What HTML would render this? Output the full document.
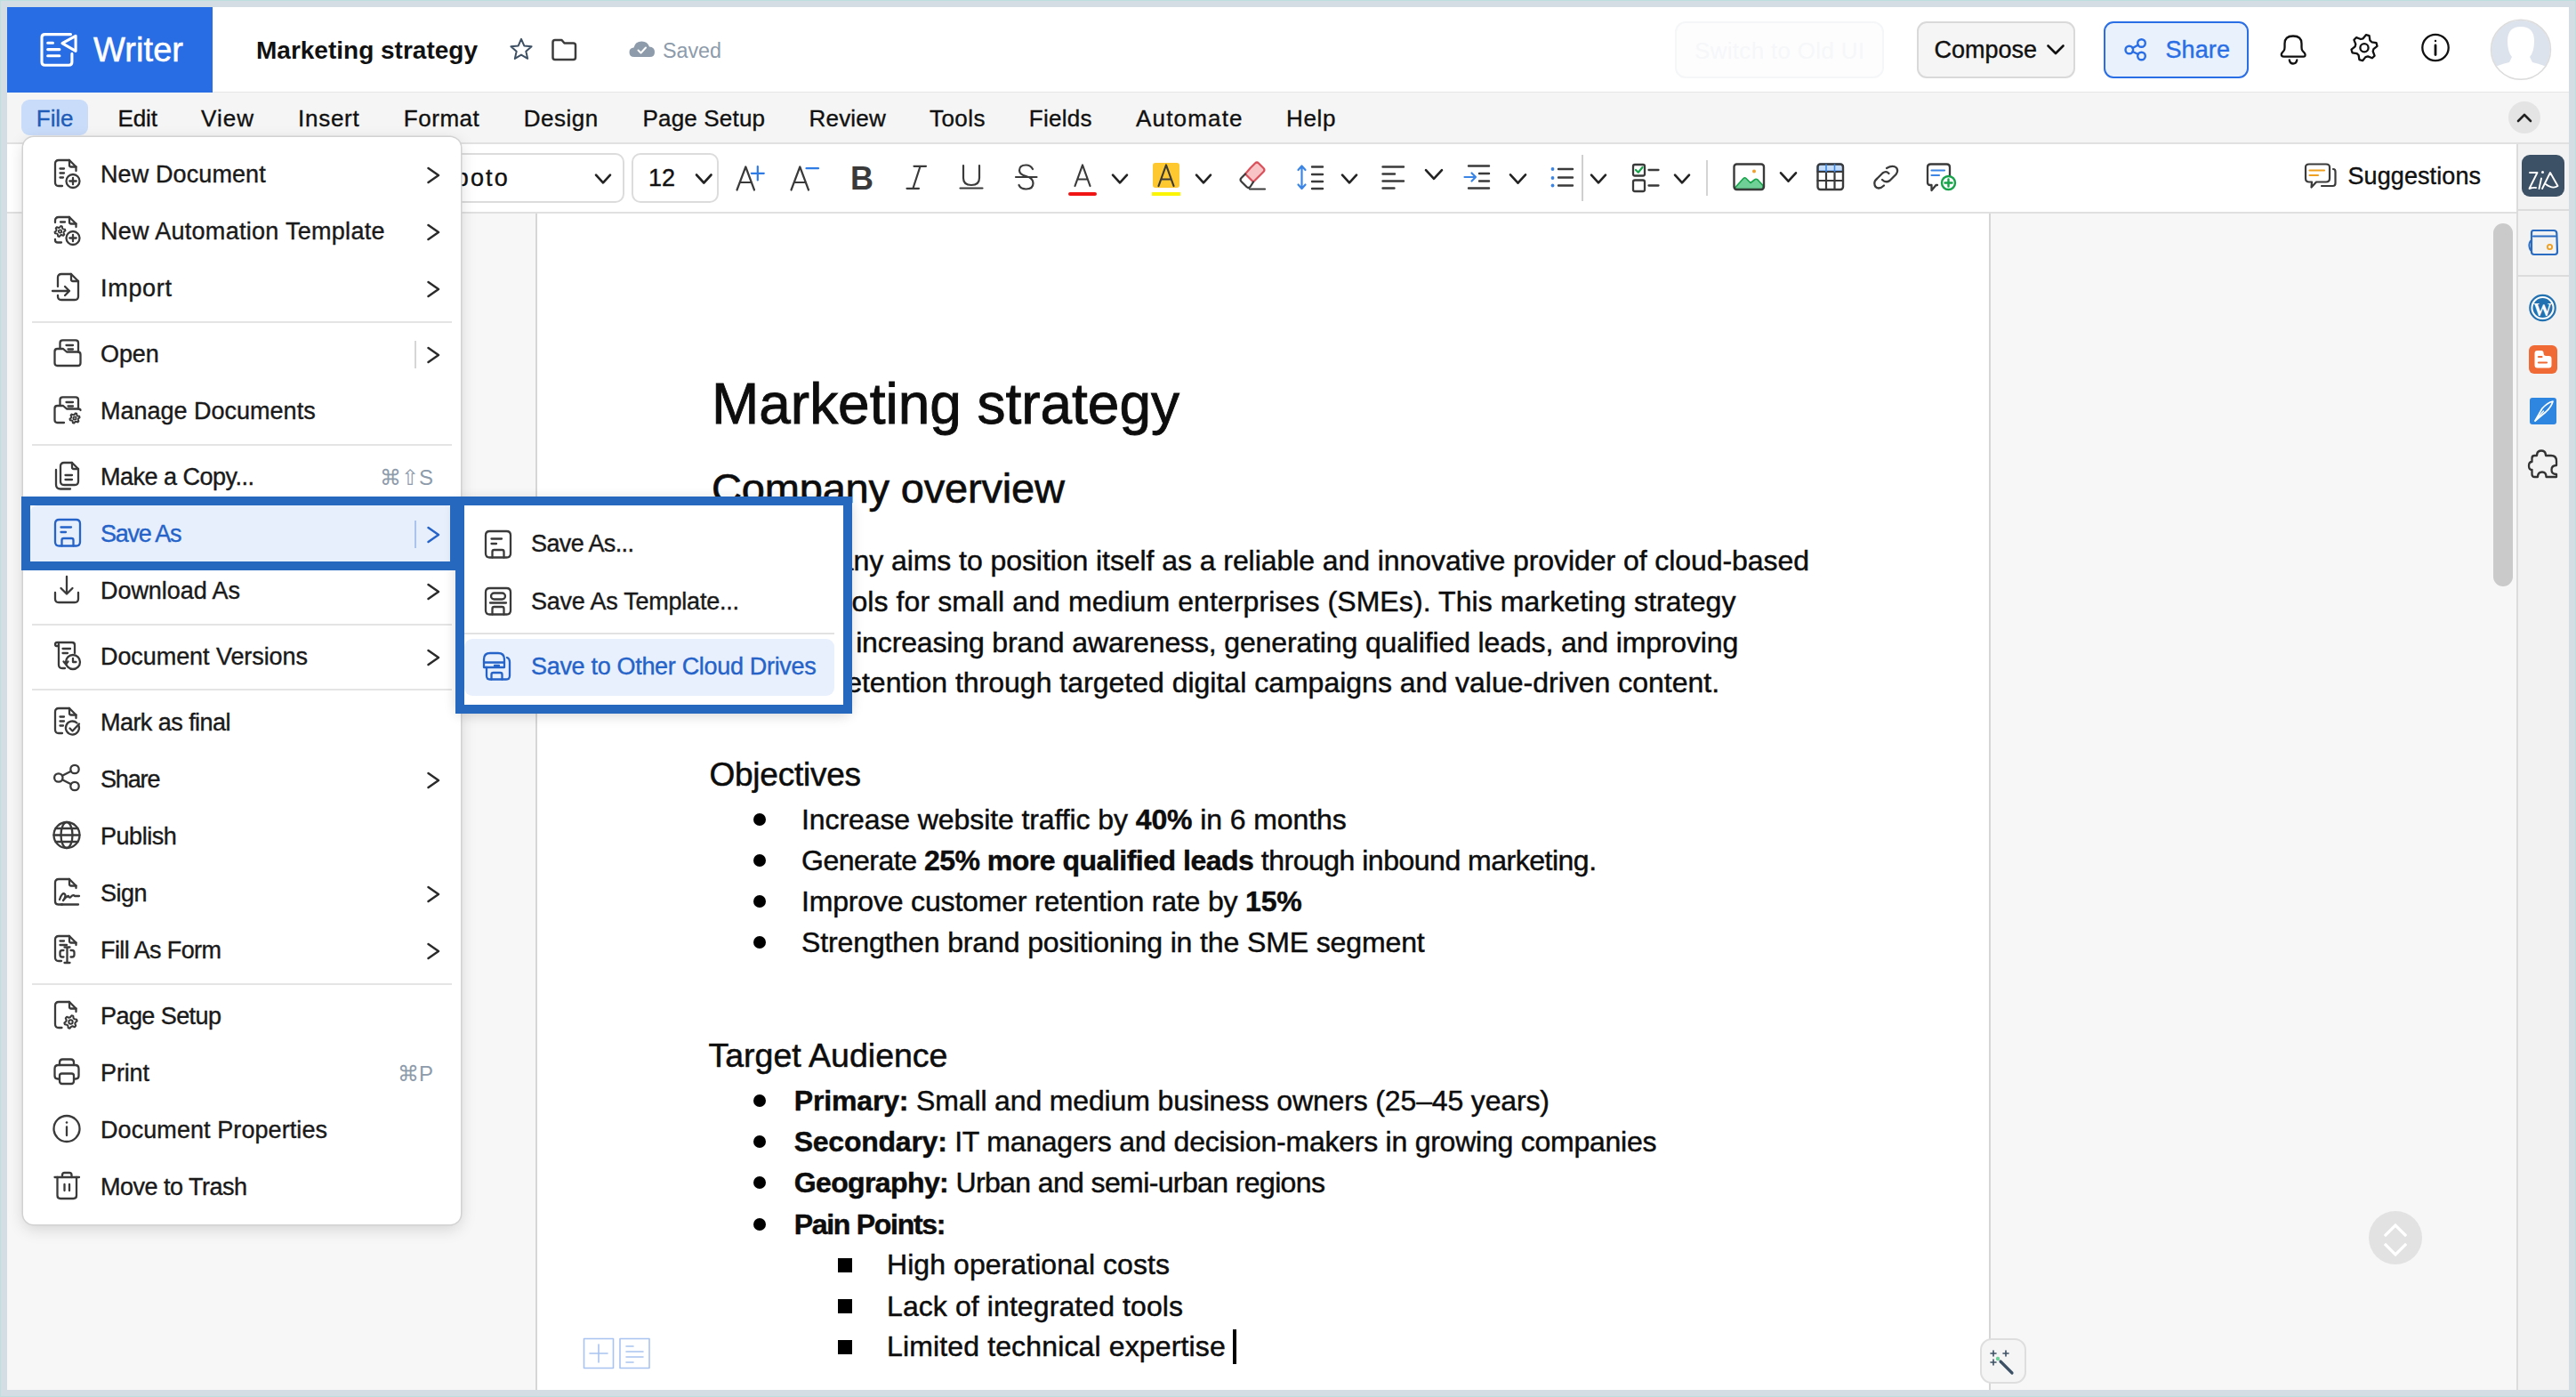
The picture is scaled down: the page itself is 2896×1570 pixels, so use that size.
<!DOCTYPE html>
<html><head><meta charset="utf-8"><style>
html,body{margin:0;padding:0;}
body{width:2896px;height:1570px;position:relative;overflow:hidden;background:#d5dde4;font-family:"Liberation Sans", sans-serif;}
.t{position:absolute;white-space:nowrap;line-height:1;}
.t b{font-weight:700;}
.b{position:absolute;box-sizing:border-box;}
svg.b{overflow:visible;}
</style></head><body>
<div class="b" style="left:0px;top:0px;width:2896px;height:1570px;border:1px solid #bde0df;"></div><div class="b" style="left:8px;top:8px;width:2880px;height:1554px;background:#f7f7f7;"></div><div class="b" style="left:8px;top:8px;width:2880px;height:96px;background:#fff;border-bottom:1px solid #e6e6e6;"></div><div class="b" style="left:8px;top:8px;width:231px;height:96px;background:#296de4;"></div><svg class="b" style="left:40px;top:32px;" width="52" height="48" viewBox="40 32 52 48" fill="none" stroke="#fff" stroke-linecap="round" stroke-linejoin="round" stroke-width="3.1">
<path d="M79.5 38.6 H50.5 Q47 38.6 47 42.1 V69.7 Q47 73.2 50.5 73.2 H77.4 Q80.9 73.2 80.9 69.7 V60.4"/>
<path d="M85.1 40.3 L70 48.7 L85.1 57.3 Z"/>
<path d="M53.7 48.3 H59.5 M53.7 55.6 H66.9 M53.7 62.7 H66.9"/>
</svg><div class="t" style="left:105.0px;top:36.6px;font-size:38px;color:#fff;font-weight:400;letter-spacing:0.075px;-webkit-text-stroke-width:0.53px;">Writer</div><div class="t" style="left:288.0px;top:43.1px;font-size:28px;color:#111;font-weight:700;">Marketing strategy</div><svg class="b" style="left:560px;top:30px;" width="50" height="50" viewBox="560 30 50 50" fill="none" stroke="#3d4f63" stroke-linecap="round" stroke-linejoin="round" stroke-width="2"><path d="M586.00,43.80 L589.29,51.47 L597.60,52.23 L591.33,57.73 L593.17,65.87 L586.00,61.60 L578.83,65.87 L580.67,57.73 L574.40,52.23 L582.71,51.47Z"/></svg><svg class="b" style="left:610px;top:35px;" width="50" height="40" viewBox="610 35 50 40" fill="none" stroke="#3c3c3c" stroke-linecap="round" stroke-linejoin="round" stroke-width="2.5"><path d="M621.5 47.5 Q621.5 45 624 45 H631.5 L634.5 48.5 H644.5 Q647 48.5 647 51 V64.5 Q647 67 644.5 67 H624 Q621.5 67 621.5 64.5 Z"/></svg><svg class="b" style="left:700px;top:40px;" width="45" height="30" viewBox="700 40 45 30" fill="none"><path d="M713 64 Q707.5 64 707.5 58.8 Q707.5 54 712.5 53.6 Q714 46.5 721.5 46.5 Q728 46.5 730 52.5 Q736 53 736 58.5 Q736 64 730.5 64 Z" fill="#8d9bab"/>
<path d="M717.5 56.5 L720.5 59.5 L726 53.5" stroke="#fff" stroke-width="2" stroke-linecap="round" stroke-linejoin="round"/></svg><div class="t" style="left:745.0px;top:45.7px;font-size:23.3px;color:#8d9bab;font-weight:400;letter-spacing:-0.016px;">Saved</div><div class="b" style="left:1883px;top:24px;width:235px;height:64px;border:2px solid #f5f6f8;border-radius:12px;background:#fdfdfe;"></div><div class="t" style="left:1905.0px;top:44.1px;font-size:26px;color:#f6f7f9;font-weight:400;letter-spacing:0.306px;">Switch to Old UI</div><div class="b" style="left:2155px;top:24px;width:178px;height:64px;background:#f5f5f5;border:2px solid #d9d9d9;border-radius:11px;"></div><div class="t" style="left:2174.5px;top:42.9px;font-size:27px;color:#111;font-weight:400;letter-spacing:-0.010px;-webkit-text-stroke-width:0.38px;">Compose</div><svg class="b" style="left:2295px;top:40px;" width="30" height="30" viewBox="2295 40 30 30" fill="none" stroke="#111" stroke-linecap="round" stroke-linejoin="round" stroke-width="2.6"><path d="M2302.5 51.5 L2311 60 L2319.5 51.5"/></svg><div class="b" style="left:2365px;top:24px;width:163px;height:64px;background:#e9f1fd;border:2.5px solid #2a6ee5;border-radius:11px;"></div><svg class="b" style="left:2380px;top:35px;" width="45" height="45" viewBox="2380 35 45 45" fill="none" stroke="#2a6ee5" stroke-linecap="round" stroke-linejoin="round" stroke-width="2.4"><circle cx="2407.5" cy="48.5" r="4.3"/><circle cx="2393.8" cy="56" r="4.3"/><circle cx="2407.5" cy="63" r="4.3"/>
<path d="M2397.6 54 L2403.8 50.5 M2397.6 58 L2403.8 61"/></svg><div class="t" style="left:2434.5px;top:43.4px;font-size:27px;color:#2a6ee5;font-weight:400;letter-spacing:0.109px;-webkit-text-stroke-width:0.38px;">Share</div><svg class="b" style="left:2555px;top:30px;" width="45" height="50" viewBox="2555 30 45 50" fill="none" stroke="#111" stroke-linecap="round" stroke-linejoin="round" stroke-width="2.3"><path d="M2567.5 63.6 H2589.5 Q2592 63.6 2591.5 61 Q2591 59.5 2588.5 57 Q2587.5 56 2587.5 53 V49 Q2587.5 40.5 2578 40.5 Q2568.5 40.5 2568.5 49 V53 Q2568.5 56 2567.5 57 Q2565 59.5 2564.8 61 Q2564.5 63.6 2567.5 63.6 Z"/>
<path d="M2573.8 67.5 Q2574.5 71.5 2578 71.5 Q2581.5 71.5 2582.3 67.5"/></svg><svg class="b" style="left:2635px;top:30px;" width="45" height="48" viewBox="2635 30 45 48" fill="none" stroke="#111" stroke-linecap="round" stroke-linejoin="round" stroke-width="2.3"><path d="M2659.91,39.22 L2663.59,40.21 L2664.39,45.37 L2666.33,47.31 L2671.49,48.11 L2672.48,51.79 L2668.41,55.07 L2667.70,57.72 L2669.58,62.59 L2666.89,65.28 L2662.02,63.40 L2659.37,64.11 L2656.09,68.18 L2652.41,67.19 L2651.61,62.03 L2649.67,60.09 L2644.51,59.29 L2643.52,55.61 L2647.59,52.33 L2648.30,49.68 L2646.42,44.81 L2649.11,42.12 L2653.98,44.00 L2656.63,43.29Z"/><circle cx="2658" cy="53.7" r="4.6"/></svg><svg class="b" style="left:2715px;top:30px;" width="45" height="48" viewBox="2715 30 45 48" fill="none" stroke="#111" stroke-linecap="round" stroke-linejoin="round" stroke-width="2.3"><circle cx="2738" cy="53.5" r="14.7"/><path d="M2738 51 V61.5" stroke-width="2.8"/><circle cx="2738" cy="46" r="1.2" fill="#111" stroke="none"/></svg><svg class="b" style="left:2798px;top:20px;" width="72" height="72" viewBox="2798 20 72 72" fill="none"><defs><clipPath id="av"><circle cx="2834" cy="55.8" r="33"/></clipPath></defs>
<circle cx="2834" cy="55.8" r="33" fill="#dde3ec"/>
<g clip-path="url(#av)"><path d="M2834 30 Q2849 30 2849 46 Q2849 58 2844 64 L2847 70 Q2862 73 2870 80 V95 H2798 V80 Q2806 73 2821 70 L2824 64 Q2819 58 2819 46 Q2819 30 2834 30 Z" fill="#fff"/></g>
<circle cx="2834" cy="55.8" r="33.5" stroke="#dcdcdc" stroke-width="1.5"/></svg><div class="b" style="left:8px;top:104px;width:2880px;height:58px;background:#f5f5f5;border-bottom:2px solid #e1e1e1;"></div><div class="b" style="left:24px;top:112px;width:75px;height:40px;background:#c9dcfa;border-radius:9px;"></div><div class="t" style="left:40.8px;top:119.8px;font-size:26px;color:#1f5cb8;font-weight:400;letter-spacing:-0.052px;-webkit-text-stroke-width:0.36px;">File</div><div class="t" style="left:132.5px;top:119.8px;font-size:26px;color:#111;font-weight:400;letter-spacing:-0.104px;-webkit-text-stroke-width:0.36px;">Edit</div><div class="t" style="left:226.0px;top:119.8px;font-size:26px;color:#111;font-weight:400;letter-spacing:1.036px;-webkit-text-stroke-width:0.36px;">View</div><div class="t" style="left:335.0px;top:119.8px;font-size:26px;color:#111;font-weight:400;letter-spacing:0.744px;-webkit-text-stroke-width:0.36px;">Insert</div><div class="t" style="left:453.8px;top:119.8px;font-size:26px;color:#111;font-weight:400;letter-spacing:0.531px;-webkit-text-stroke-width:0.36px;">Format</div><div class="t" style="left:588.8px;top:119.8px;font-size:26px;color:#111;font-weight:400;letter-spacing:0.512px;-webkit-text-stroke-width:0.36px;">Design</div><div class="t" style="left:722.5px;top:119.8px;font-size:26px;color:#111;font-weight:400;letter-spacing:0.179px;-webkit-text-stroke-width:0.36px;">Page Setup</div><div class="t" style="left:909.5px;top:119.8px;font-size:26px;color:#111;font-weight:400;letter-spacing:0.200px;-webkit-text-stroke-width:0.36px;">Review</div><div class="t" style="left:1045.0px;top:119.8px;font-size:26px;color:#111;font-weight:400;letter-spacing:0.449px;-webkit-text-stroke-width:0.36px;">Tools</div><div class="t" style="left:1156.8px;top:119.8px;font-size:26px;color:#111;font-weight:400;letter-spacing:0.278px;-webkit-text-stroke-width:0.36px;">Fields</div><div class="t" style="left:1277.0px;top:119.8px;font-size:26px;color:#111;font-weight:400;letter-spacing:1.172px;-webkit-text-stroke-width:0.36px;">Automate</div><div class="t" style="left:1446.0px;top:119.8px;font-size:26px;color:#111;font-weight:400;letter-spacing:0.672px;-webkit-text-stroke-width:0.36px;">Help</div><div class="b" style="left:2820px;top:114px;width:36px;height:36px;background:#e4e4e4;border-radius:50%;"></div><svg class="b" style="left:2825px;top:120px;" width="26" height="26" viewBox="2825 120 26 26" fill="none" stroke="#222" stroke-linecap="round" stroke-linejoin="round" stroke-width="2.6"><path d="M2831 136 L2838 129 L2845 136"/></svg><div class="b" style="left:8px;top:162px;width:2821px;height:78px;background:#fff;border-bottom:2px solid #e0e0e0;"></div><div class="b" style="left:2829px;top:162px;width:59px;height:1400px;background:#f2f2f2;border-left:2px solid #dcdcdc;"></div><div class="b" style="left:602px;top:240px;width:1636px;height:1322px;background:#fff;border-left:2px solid #d6d6d6;border-right:2px solid #d6d6d6;"></div><div class="b" style="left:2803px;top:251px;width:22px;height:408px;background:#cacaca;border-radius:11px;"></div><div class="b" style="left:380px;top:172px;width:322px;height:56px;border:2px solid #dcdcdc;border-radius:10px;background:#fff;"></div><div class="t" style="left:472.8px;top:186.7px;font-size:27px;color:#111;font-weight:400;letter-spacing:2.184px;-webkit-text-stroke-width:0.38px;">Roboto</div><svg class="b" style="left:665px;top:188.5px;" width="26" height="24" viewBox="665 188.5 26 24" fill="none" stroke="#222" stroke-linecap="round" stroke-linejoin="round" stroke-width="2.6"><path d="M670 196.1 L678.0 204.9 L686 196.1"/></svg><div class="b" style="left:710px;top:172px;width:98px;height:56px;border:2px solid #dcdcdc;border-radius:10px;background:#fff;"></div><div class="t" style="left:729.0px;top:186.7px;font-size:27px;color:#111;font-weight:400;-webkit-text-stroke-width:0.38px;">12</div><svg class="b" style="left:777.5px;top:188.5px;" width="26.5" height="24" viewBox="777.5 188.5 26.5 24" fill="none" stroke="#222" stroke-linecap="round" stroke-linejoin="round" stroke-width="2.6"><path d="M782.5 196.0 L790.8 205.0 L799 196.0"/></svg><svg class="b" style="left:820px;top:178px;" width="45" height="42" viewBox="820 178 45 42" fill="none" stroke="#3a3a3a" stroke-linecap="round" stroke-linejoin="round" stroke-width="2.2"><path d="M828.5 213.5 L838.3 187.5 L848 213.5 M832 205 H844.5"/><path d="M851.8 187 V202.5 M844.8 194.8 H858.8" stroke="#2f7be6"/></svg><svg class="b" style="left:880px;top:178px;" width="45" height="42" viewBox="880 178 45 42" fill="none" stroke="#3a3a3a" stroke-linecap="round" stroke-linejoin="round" stroke-width="2.2"><path d="M889.5 213.5 L899.3 187.5 L909 213.5 M893 205 H905.5"/><path d="M906.5 189.2 H920" stroke="#2f7be6"/></svg><div class="t" style="left:956.0px;top:182.8px;font-size:36px;color:#3a3a3a;font-weight:700;">B</div><svg class="b" style="left:1012px;top:178px;" width="35" height="42" viewBox="1012 178 35 42" fill="none" stroke="#3a3a3a" stroke-linecap="round" stroke-linejoin="round" stroke-width="2.2"><path d="M1027.5 186.8 H1041 M1019.5 211.8 H1033 M1034.5 187 L1026.5 211.5"/></svg><svg class="b" style="left:1072px;top:178px;" width="40" height="42" viewBox="1072 178 40 42" fill="none" stroke="#3a3a3a" stroke-linecap="round" stroke-linejoin="round" stroke-width="2.2"><path d="M1083 186 V200 Q1083 208 1092 208 Q1101 208 1101 200 V186 M1079.5 211.5 H1104.5"/></svg><svg class="b" style="left:1136px;top:178px;" width="36" height="42" viewBox="1136 178 36 42" fill="none" stroke="#3a3a3a" stroke-linecap="round" stroke-linejoin="round" stroke-width="2.2"><path d="M1161 190 Q1158.5 185.5 1153.5 185.5 Q1146 185.5 1146 191.5 Q1146 196 1153.5 198 Q1161.5 200 1161.5 206 Q1161.5 212.5 1153.5 212.5 Q1147.5 212.5 1145.5 208 M1142 199 H1165.5"/></svg><svg class="b" style="left:1200px;top:178px;" width="36" height="45" viewBox="1200 178 36 45" fill="none" stroke="#3a3a3a" stroke-linecap="round" stroke-linejoin="round" stroke-width="2.2"><path d="M1208.5 209 L1217 185.5 L1225.5 209 M1211.5 201.5 H1222.5"/></svg><div class="b" style="left:1201px;top:216px;width:32px;height:4px;background:#f01414;border-radius:2px;"></div><svg class="b" style="left:1246px;top:188.5px;" width="26" height="24" viewBox="1246 188.5 26 24" fill="none" stroke="#222" stroke-linecap="round" stroke-linejoin="round" stroke-width="2.6"><path d="M1251 196.1 L1259.0 204.9 L1267 196.1"/></svg><div class="b" style="left:1296px;top:182.5px;width:30px;height:28.5px;background:#fdc830;border-radius:3px;"></div><svg class="b" style="left:1300px;top:178px;" width="36" height="42" viewBox="1300 178 36 42" fill="none" stroke="#3a3a3a" stroke-linecap="round" stroke-linejoin="round" stroke-width="2.2"><path d="M1302.5 209 L1311 185.5 L1319.5 209 M1305.5 201.5 H1316.5"/></svg><div class="b" style="left:1295px;top:216px;width:32px;height:4px;background:#fbf600;"></div><svg class="b" style="left:1340px;top:188.5px;" width="26" height="24" viewBox="1340 188.5 26 24" fill="none" stroke="#222" stroke-linecap="round" stroke-linejoin="round" stroke-width="2.6"><path d="M1345 196.1 L1353.0 204.9 L1361 196.1"/></svg><svg class="b" style="left:1388px;top:178px;" width="40" height="42" viewBox="1388 178 40 42" fill="none" stroke="#3a3a3a" stroke-linecap="round" stroke-linejoin="round" stroke-width="2.2"><path d="M1405.5 189 L1411 183.5 Q1413 181.5 1415 183.5 L1420.5 189 Q1422.5 191 1420.5 193 L1409 204.5 L1400 195.5 Z" fill="#f9c4c6" stroke="#d9505b"/>
<path d="M1400 195.5 L1395.5 200 Q1393.5 202 1395.5 204 L1401.5 210 Q1403.5 212 1405.5 210 L1409 204.5" />
<path d="M1405 212.5 H1422"/></svg><svg class="b" style="left:1450px;top:178px;" width="45" height="42" viewBox="1450 178 45 42" fill="none" stroke="#3a3a3a" stroke-linecap="round" stroke-linejoin="round" stroke-width="2.2"><path d="M1463.5 187 V211.5 M1459.5 191 L1463.5 186.5 L1467.5 191 M1459.5 207.5 L1463.5 212 L1467.5 207.5" stroke="#3a85e5"/><path d="M1475 187.5 H1487 M1475 196 H1487 M1475 204 H1487 M1475 212 H1487" stroke-width="2.4"/></svg><svg class="b" style="left:1504px;top:188.5px;" width="26" height="24" viewBox="1504 188.5 26 24" fill="none" stroke="#222" stroke-linecap="round" stroke-linejoin="round" stroke-width="2.6"><path d="M1509 196.1 L1517.0 204.9 L1525 196.1"/></svg><svg class="b" style="left:1548px;top:178px;" width="36" height="42" viewBox="1548 178 36 42" fill="none" stroke="#3a3a3a" stroke-linecap="round" stroke-linejoin="round" stroke-width="2.2"><path d="M1554.5 187.5 H1578 M1554.5 195.5 H1568 M1554.5 203.5 H1578 M1554.5 211.5 H1567.5" stroke-width="2.4"/></svg><svg class="b" style="left:1598px;top:184px;" width="28" height="24" viewBox="1598 184 28 24" fill="none" stroke="#222" stroke-linecap="round" stroke-linejoin="round" stroke-width="2.6"><path d="M1603 191.1 L1612.0 200.9 L1621 191.1"/></svg><svg class="b" style="left:1640px;top:178px;" width="40" height="42" viewBox="1640 178 40 42" fill="none" stroke="#3a3a3a" stroke-linecap="round" stroke-linejoin="round" stroke-width="2.2"><path d="M1651 186.5 H1674 M1663 195 H1674 M1663 203.5 H1674 M1651 211.5 H1674" stroke-width="2.4"/><path d="M1646.5 199 H1659 M1654.5 194.5 L1659 199 L1654.5 203.5" stroke="#3a85e5"/></svg><svg class="b" style="left:1693px;top:188.5px;" width="27" height="24" viewBox="1693 188.5 27 24" fill="none" stroke="#222" stroke-linecap="round" stroke-linejoin="round" stroke-width="2.6"><path d="M1698 195.8 L1706.5 205.2 L1715 195.8"/></svg><svg class="b" style="left:1738px;top:178px;" width="36" height="42" viewBox="1738 178 36 42" fill="none" stroke="#3a3a3a" stroke-linecap="round" stroke-linejoin="round" stroke-width="2.2"><circle cx="1745.5" cy="190" r="1.9" fill="#3a85e5" stroke="none"/><circle cx="1745.5" cy="200" r="1.9" fill="#3a85e5" stroke="none"/><circle cx="1745.5" cy="208.5" r="1.9" fill="#3a85e5" stroke="none"/><path d="M1752 190 H1768 M1752 199.5 H1768 M1752 208.5 H1768" stroke-width="2.4"/></svg><div class="b" style="left:1778px;top:174px;width:2px;height:52px;background:#cfcfcf;"></div><svg class="b" style="left:1784px;top:188.5px;" width="26" height="24" viewBox="1784 188.5 26 24" fill="none" stroke="#222" stroke-linecap="round" stroke-linejoin="round" stroke-width="2.6"><path d="M1789 196.1 L1797.0 204.9 L1805 196.1"/></svg><svg class="b" style="left:1830px;top:178px;" width="40" height="42" viewBox="1830 178 40 42" fill="none" stroke="#3a3a3a" stroke-linecap="round" stroke-linejoin="round" stroke-width="2.2"><rect x="1836" y="185" width="13" height="12.5" rx="2" stroke-width="2.3"/><rect x="1836" y="202.5" width="13" height="12.5" rx="2" stroke-width="2.3"/><path d="M1853.5 191 H1864.5 M1853.5 208.5 H1864.5" stroke-width="2.3"/><path d="M1839 191 L1841.8 193.8 L1846.5 188" stroke="#16a34a" stroke-width="2.2"/></svg><svg class="b" style="left:1878px;top:188.5px;" width="26" height="24" viewBox="1878 188.5 26 24" fill="none" stroke="#222" stroke-linecap="round" stroke-linejoin="round" stroke-width="2.6"><path d="M1883 196.1 L1891.0 204.9 L1899 196.1"/></svg><div class="b" style="left:1918px;top:180px;width:2px;height:40px;background:#d4d4d4;"></div><svg class="b" style="left:1944px;top:178px;" width="45" height="42" viewBox="1944 178 45 42" fill="none" stroke="#3a3a3a" stroke-linecap="round" stroke-linejoin="round" stroke-width="2.2"><path d="M1950.5 211 L1960 200.5 Q1961.5 199 1963 200.5 L1968 205.5 L1972.5 202 Q1974 200.5 1976 202 L1982 208.5 V212.5 H1950.5 Z" fill="#6fcf97" stroke="#16a34a" stroke-width="1.6"/>
<rect x="1949.5" y="184.5" width="33.5" height="28.5" rx="3" stroke-width="2.4"/><circle cx="1972" cy="192.5" r="2" fill="#f0a030" stroke="none"/></svg><svg class="b" style="left:1997px;top:187px;" width="27" height="24" viewBox="1997 187 27 24" fill="none" stroke="#222" stroke-linecap="round" stroke-linejoin="round" stroke-width="2.6"><path d="M2002 194.3 L2010.5 203.7 L2019 194.3"/></svg><svg class="b" style="left:2038px;top:178px;" width="40" height="42" viewBox="2038 178 40 42" fill="none" stroke="#3a3a3a" stroke-linecap="round" stroke-linejoin="round" stroke-width="2.2"><path d="M2043.5 188 Q2043.5 184.5 2047 184.5 H2068.5 Q2072 184.5 2072 188 V192.5 H2043.5 Z" fill="#c6dcfb" stroke="#3a85e5" stroke-width="2"/>
<rect x="2043.5" y="184.5" width="28.5" height="28.5" rx="3" stroke-width="2.4"/><path d="M2043.5 193 H2072 M2043.5 203 H2072 M2053 193 V213 M2062.5 193 V213" stroke-width="2.2"/><path d="M2053 185 V193 M2062.5 185 V193" stroke="#3a85e5" stroke-width="1.6"/></svg><svg class="b" style="left:2100px;top:178px;" width="40" height="42" viewBox="2100 178 40 42" fill="none" stroke="#3a3a3a" stroke-linecap="round" stroke-linejoin="round" stroke-width="2.2"><path d="M2118 208.5 Q2115 211.5 2112 211.5 Q2107.5 211 2107.3 206 Q2107.3 203 2110.5 200.5 L2116.5 194.5 Q2120.5 191.5 2123.5 195 M2116 202 Q2120 206 2124.5 203 L2131.5 196 Q2134.5 192 2132 188.5 Q2128 185 2121 189" stroke-width="2.3"/></svg><svg class="b" style="left:2160px;top:178px;" width="45" height="42" viewBox="2160 178 45 42" fill="none" stroke="#3a3a3a" stroke-linecap="round" stroke-linejoin="round" stroke-width="2.2"><path d="M2192 198 V188 Q2192 184.5 2188.5 184.5 H2170.5 Q2167 184.5 2167 188 V205 Q2167 208 2170 208 H2171.5 L2171.5 214 L2176.5 208 H2178" stroke-width="2.3"/>
<path d="M2171.5 191.5 H2186 M2171.5 197 H2180" stroke="#3a85e5" stroke-width="2.2"/>
<circle cx="2190.5" cy="205.5" r="7.5" fill="#fff" stroke="#16a34a" stroke-width="2.4"/><path d="M2190.5 201.5 V209.5 M2186.5 205.5 H2194.5" stroke="#16a34a" stroke-width="2.4"/></svg><svg class="b" style="left:2585px;top:178px;" width="45" height="45" viewBox="2585 178 45 45" fill="none" stroke="#3a3a3a" stroke-linecap="round" stroke-linejoin="round" stroke-width="2.2"><path d="M2599 204.5 H2596 Q2592 204.5 2592 200.5 V188 Q2592 184.5 2596 184.5 H2615 Q2619 184.5 2619 188 V200.5 Q2619 204.5 2615 204.5 H2604 L2598.5 210.5 Z" stroke-width="2.2"/>
<path d="M2596.5 191.5 H2613 M2596.5 197 H2606" stroke="#f0a020" stroke-width="2.2"/>
<path d="M2623 190 Q2625.5 190 2625.5 193 V206 Q2625.5 209 2622.5 209 H2610" stroke-width="2.2"/></svg><div class="t" style="left:2639.5px;top:185.4px;font-size:27px;color:#111;font-weight:400;letter-spacing:0.089px;-webkit-text-stroke-width:0.38px;">Suggestions</div><div class="b" style="left:2835px;top:174px;width:48px;height:47px;background:#3d5166;border-radius:9px;"></div><svg class="b" style="left:2835px;top:174px;" width="48" height="47" viewBox="2835 174 48 47" fill="none" stroke="#3a3a3a" stroke-linecap="round" stroke-linejoin="round" stroke-width="2.2"><path d="M2844 194 H2852.5 L2843.5 212 Q2848 210.5 2851 211 M2857 200.5 L2854.5 212 M2858 212 L2867 194 L2875.5 209 Q2870 213 2862 207" stroke="#fff" stroke-width="1.9"/><circle cx="2858.5" cy="193.5" r="1.5" fill="#fff" stroke="none"/></svg><div class="b" style="left:2831px;top:235px;width:57px;height:2px;background:#dcdcdc;"></div><div class="b" style="left:2831px;top:309px;width:57px;height:2px;background:#dcdcdc;"></div><svg class="b" style="left:2838px;top:252px;" width="42" height="40" viewBox="2838 252 42 40" fill="none" stroke="#3a3a3a" stroke-linecap="round" stroke-linejoin="round" stroke-width="2.2"><path d="M2848 259 H2871 Q2874 259 2874.3 262 L2875 283 Q2875 286 2872 286 H2849 Q2846 286 2846 283 V262 Q2846 259 2848 259 Z" stroke="#2a6cc2" stroke-width="2.2"/><path d="M2848 265.5 H2873" stroke="#2a6cc2" stroke-width="2"/><path d="M2846 270 Q2843 272 2843.5 277 Q2844 281 2846 282" stroke="#2a6cc2" stroke-width="2"/><circle cx="2866.5" cy="277.5" r="2.6" stroke="#f0a020" stroke-width="1.9"/></svg><svg class="b" style="left:2840px;top:326px;" width="38" height="38" viewBox="2840 326 38 38" fill="none" stroke="#3a3a3a" stroke-linecap="round" stroke-linejoin="round" stroke-width="2.2"><circle cx="2858.5" cy="346" r="14.2" fill="#fff" stroke="#2271b1" stroke-width="2.2"/><circle cx="2858.5" cy="346" r="11" fill="#2271b1" stroke="none"/><text x="2858.5" y="354.5" font-family="Liberation Serif" font-weight="700" font-size="21" fill="#fff" text-anchor="middle" stroke="none">W</text></svg><div class="b" style="left:2843px;top:388px;width:32px;height:32px;background:#f06a35;border-radius:6px;"></div><svg class="b" style="left:2843px;top:388px;" width="32" height="32" viewBox="2843 388 32 32" fill="none" stroke="#3a3a3a" stroke-linecap="round" stroke-linejoin="round" stroke-width="2.2"><path d="M2849.5 397 Q2849.5 394 2852.5 394 H2857 Q2859.5 394 2859.5 396.5 Q2859.5 400 2862.5 400 H2865.5 Q2868.5 400 2868.5 403 V410.5 Q2868.5 413.5 2865.5 413.5 H2852.5 Q2849.5 413.5 2849.5 410.5 Z" fill="#fff" stroke="none"/><path d="M2854 401 H2857.5 M2854 407.5 H2863" stroke="#f06a35" stroke-width="2.2"/></svg><div class="b" style="left:2844px;top:447px;width:30px;height:30px;background:#2f86e0;border-radius:3px;"></div><svg class="b" style="left:2844px;top:447px;" width="30" height="30" viewBox="2844 447 30 30" fill="none" stroke="#3a3a3a" stroke-linecap="round" stroke-linejoin="round" stroke-width="2.2"><path d="M2850 473 L2858 459 Q2864 452.5 2870 451 Q2868.5 457 2862 463 Z" stroke="#fff" stroke-width="1.7"/><path d="M2850 473 L2859.5 462" stroke="#fff" stroke-width="1.2"/></svg><svg class="b" style="left:2838px;top:502px;" width="42" height="40" viewBox="2838 502 42 40" fill="none" stroke="#3a3a3a" stroke-linecap="round" stroke-linejoin="round" stroke-width="2.2"><path d="M2852 512 Q2852 506.5 2857 506.5 Q2862 506.5 2862 512 H2868 Q2874 512 2874 518 V523 Q2868.5 523 2868.5 528 Q2868.5 533 2874 533 V536 H2862.5 Q2862.5 530.5 2858 530.5 Q2853 530.5 2853 536 H2849.5 Q2846.5 536 2846.5 533 V528 Q2843 528 2843 523.5 Q2843 519 2846.5 519 V515 Q2846.5 512 2849.5 512 Z" stroke="#333" stroke-width="2.3"/></svg><div class="t" style="left:800.0px;top:421.6px;font-size:64px;color:#0d0d0d;font-weight:400;letter-spacing:-0.026px;-webkit-text-stroke-width:0.90px;">Marketing strategy</div><div class="t" style="left:800.0px;top:525.0px;font-size:47px;color:#0d0d0d;font-weight:400;letter-spacing:-0.178px;-webkit-text-stroke-width:0.66px;">Company overview</div><div class="t" style="left:800.0px;top:613.7px;font-size:32px;color:#0d0d0d;font-weight:400;letter-spacing:-0.067px;-webkit-text-stroke-width:0.45px;">The company aims to position itself as a reliable and innovative provider of cloud-based</div><div class="t" style="left:800.0px;top:659.7px;font-size:32px;color:#0d0d0d;font-weight:400;letter-spacing:0.087px;-webkit-text-stroke-width:0.45px;">software tools for small and medium enterprises (SMEs). This marketing strategy</div><div class="t" style="left:800.0px;top:705.7px;font-size:32px;color:#0d0d0d;font-weight:400;letter-spacing:-0.138px;-webkit-text-stroke-width:0.45px;">focuses on increasing brand awareness, generating qualified leads, and improving</div><div class="t" style="left:800.0px;top:751.2px;font-size:32px;color:#0d0d0d;font-weight:400;-webkit-text-stroke-width:0.45px;">customer retention through targeted digital campaigns and value-driven content.</div><div class="t" style="left:797.5px;top:852.0px;font-size:37px;color:#0d0d0d;font-weight:400;letter-spacing:-0.248px;-webkit-text-stroke-width:0.52px;">Objectives</div><div class="b" style="left:847px;top:913.75px;width:14px;height:14.0px;background:#000;border-radius:50%;"></div><div class="t" style="left:901.0px;top:905.0px;font-size:32px;color:#0d0d0d;font-weight:400;letter-spacing:-0.092px;-webkit-text-stroke-width:0.45px;">Increase website traffic by <b>40%</b> in 6 months</div><div class="b" style="left:847px;top:959.5px;width:14px;height:14.0px;background:#000;border-radius:50%;"></div><div class="t" style="left:901.0px;top:950.7px;font-size:32px;color:#0d0d0d;font-weight:400;letter-spacing:-0.494px;-webkit-text-stroke-width:0.45px;">Generate <b>25% more qualified leads</b> through inbound marketing.</div><div class="b" style="left:847px;top:1005.5px;width:14px;height:14.0px;background:#000;border-radius:50%;"></div><div class="t" style="left:901.0px;top:996.7px;font-size:32px;color:#0d0d0d;font-weight:400;letter-spacing:-0.173px;-webkit-text-stroke-width:0.45px;">Improve customer retention rate by <b>15%</b></div><div class="b" style="left:847px;top:1051.5px;width:14px;height:14.0px;background:#000;border-radius:50%;"></div><div class="t" style="left:901.0px;top:1042.7px;font-size:32px;color:#0d0d0d;font-weight:400;letter-spacing:-0.119px;-webkit-text-stroke-width:0.45px;">Strengthen brand positioning in the SME segment</div><div class="t" style="left:796.5px;top:1168.1px;font-size:37.5px;color:#0d0d0d;font-weight:400;-webkit-text-stroke-width:0.53px;">Target Audience</div><div class="b" style="left:847px;top:1230.0px;width:14px;height:14.0px;background:#000;border-radius:50%;"></div><div class="t" style="left:892.7px;top:1221.2px;font-size:32px;color:#0d0d0d;font-weight:400;letter-spacing:-0.148px;-webkit-text-stroke-width:0.45px;"><b>Primary:</b> Small and medium business owners (25–45 years)</div><div class="b" style="left:847px;top:1276.0px;width:14px;height:14.0px;background:#000;border-radius:50%;"></div><div class="t" style="left:892.7px;top:1267.2px;font-size:32px;color:#0d0d0d;font-weight:400;letter-spacing:-0.241px;-webkit-text-stroke-width:0.45px;"><b>Secondary:</b> IT managers and decision-makers in growing companies</div><div class="b" style="left:847px;top:1322.0px;width:14px;height:14.0px;background:#000;border-radius:50%;"></div><div class="t" style="left:892.7px;top:1313.2px;font-size:32px;color:#0d0d0d;font-weight:400;letter-spacing:-0.616px;-webkit-text-stroke-width:0.45px;"><b>Geography:</b> Urban and semi-urban regions</div><div class="b" style="left:847px;top:1368.5px;width:14px;height:14.0px;background:#000;border-radius:50%;"></div><div class="t" style="left:892.7px;top:1359.7px;font-size:32px;color:#0d0d0d;font-weight:400;letter-spacing:-1.282px;-webkit-text-stroke-width:0.45px;"><b>Pain Points:</b></div><div class="b" style="left:942px;top:1413.7px;width:16px;height:16.0px;background:#000;"></div><div class="t" style="left:997.0px;top:1405.4px;font-size:32px;color:#0d0d0d;font-weight:400;letter-spacing:0.065px;-webkit-text-stroke-width:0.45px;">High operational costs</div><div class="b" style="left:942px;top:1459.8px;width:16px;height:16.0px;background:#000;"></div><div class="t" style="left:997.0px;top:1451.5px;font-size:32px;color:#0d0d0d;font-weight:400;letter-spacing:0.092px;-webkit-text-stroke-width:0.45px;">Lack of integrated tools</div><div class="b" style="left:942px;top:1505.7px;width:16px;height:16.0px;background:#000;"></div><div class="t" style="left:997.0px;top:1497.4px;font-size:32px;color:#0d0d0d;font-weight:400;letter-spacing:0.139px;-webkit-text-stroke-width:0.45px;">Limited technical expertise</div><div class="b" style="left:1386px;top:1494px;width:3.5px;height:39px;background:#000;"></div><svg class="b" style="left:650px;top:1498px;" width="90" height="46" viewBox="650 1498 90 46" fill="none" stroke="#3a3a3a" stroke-linecap="round" stroke-linejoin="round" stroke-width="2.2"><rect x="656.5" y="1504.5" width="33" height="33" stroke="#a9c4f0" stroke-width="1.6"/><path d="M673 1511 V1531 M663 1521 H683" stroke="#a9c4f0" stroke-width="1.6"/><rect x="697" y="1504.5" width="33" height="33" stroke="#a9c4f0" stroke-width="1.6"/><path d="M704 1513 H712 M704 1519 H723 M704 1525 H723 M704 1531 H712" stroke="#a9c4f0" stroke-width="1.6"/></svg><div class="b" style="left:2226px;top:1504px;width:52px;height:51px;background:#f5f5f5;border:2px solid #dedede;border-radius:13px;"></div><svg class="b" style="left:2226px;top:1504px;" width="52" height="51" viewBox="2226 1504 52 51" fill="none" stroke="#3a3a3a" stroke-linecap="round" stroke-linejoin="round" stroke-width="2.2"><path d="M2249 1530 L2262 1543" stroke="#3d5166" stroke-width="3.2"/><path d="M2241 1518 V1524 M2238 1521 H2244 M2255 1518 V1524 M2252 1521 H2258 M2241 1528 V1534 M2238 1531 H2244" stroke="#3d5166" stroke-width="1.6"/><circle cx="2246" cy="1527" r="2.2" fill="#6fd19a" stroke="none"/></svg><div class="b" style="left:2663px;top:1361px;width:60px;height:60px;background:#e2e2e2;border-radius:50%;"></div><svg class="b" style="left:2663px;top:1361px;" width="60" height="60" viewBox="2663 1361 60 60" fill="none" stroke="#3a3a3a" stroke-linecap="round" stroke-linejoin="round" stroke-width="2.2"><path d="M2682 1388 L2693 1377 L2704 1388 M2682 1399 L2693 1410 L2704 1399" stroke="#fff" stroke-width="3.2" stroke-linecap="square" stroke-linejoin="miter"/></svg><div class="b" style="left:26px;top:154px;width:492px;height:1222px;background:#fff;border-radius:12px;box-shadow:0 0 0 1.5px #d2d2d2, 0 5px 18px rgba(0,0,0,0.15);"></div><div class="b" style="left:36px;top:361px;width:472px;height:2px;background:#e4e4e4;"></div><div class="b" style="left:36px;top:499px;width:472px;height:2px;background:#e4e4e4;"></div><div class="b" style="left:36px;top:701px;width:472px;height:2px;background:#e4e4e4;"></div><div class="b" style="left:36px;top:774px;width:472px;height:2px;background:#e4e4e4;"></div><div class="b" style="left:36px;top:1105px;width:472px;height:2px;background:#e4e4e4;"></div><div class="b" style="left:34px;top:568px;width:476px;height:73px;background:#e8effc;border-radius:8px;"></div><svg class="b" style="left:58.5px;top:176.5px;" width="34" height="36" viewBox="0 0 34 36" fill="none" stroke="#3a3a3a" stroke-linecap="round" stroke-linejoin="round" stroke-width="2.3"><path d="M11 32 H7 Q3 32 3 28 V7 Q3 3 7 3 H19 L26.5 10.5 V15"/><path d="M19 3 V8.5 Q19 10.5 21 10.5 H26.5"/><path d="M8.5 12.5 H13 M8.5 17.5 H13 M8.5 22.5 H12"/><circle cx="23" cy="26.5" r="7.5"/><path d="M23 22.8 V30.2 M19.3 26.5 H26.7"/></svg><div class="t" style="left:113.0px;top:182.9px;font-size:27px;color:#1a1a1a;font-weight:400;letter-spacing:0.107px;-webkit-text-stroke-width:0.38px;">New Document</div><svg class="b" style="left:474px;top:177px;" width="26" height="30" viewBox="474 177 26 30" fill="none" stroke="#2a2a2a" stroke-linecap="round" stroke-linejoin="round" stroke-width="2.5"><path d="M481.5 189 L493 197 L481.5 205"/></svg><svg class="b" style="left:58.5px;top:240.5px;" width="34" height="36" viewBox="0 0 34 36" fill="none" stroke="#3a3a3a" stroke-linecap="round" stroke-linejoin="round" stroke-width="2.3"><path d="M3 9 V7 Q3 3 7 3 H19 L26.5 10.5 V14"/><path d="M19 3 V8.5 Q19 10.5 21 10.5 H26.5"/><path d="M9 8.5 H14"/><path d="M9.28,13.05 L10.80,13.46 L11.12,15.59 L11.91,16.38 L14.04,16.70 L14.45,18.22 L12.76,19.56 L12.47,20.65 L13.26,22.65 L12.15,23.76 L10.15,22.97 L9.06,23.26 L7.72,24.95 L6.20,24.54 L5.88,22.41 L5.09,21.62 L2.96,21.30 L2.55,19.78 L4.24,18.44 L4.53,17.35 L3.74,15.35 L4.85,14.24 L6.85,15.03 L7.94,14.74Z" stroke-width="2"/><circle cx="8.5" cy="19" r="1.7" stroke-width="1.8"/><path d="M3 28 V29 Q3 31.5 6 31.5 H10"/><circle cx="23" cy="26.5" r="7.5"/><path d="M23 22.8 V30.2 M19.3 26.5 H26.7"/></svg><div class="t" style="left:113.0px;top:246.9px;font-size:27px;color:#1a1a1a;font-weight:400;letter-spacing:0.287px;-webkit-text-stroke-width:0.38px;">New Automation Template</div><svg class="b" style="left:474px;top:241px;" width="26" height="30" viewBox="474 241 26 30" fill="none" stroke="#2a2a2a" stroke-linecap="round" stroke-linejoin="round" stroke-width="2.5"><path d="M481.5 253 L493 261 L481.5 269"/></svg><svg class="b" style="left:58.5px;top:304.5px;" width="34" height="36" viewBox="0 0 34 36" fill="none" stroke="#3a3a3a" stroke-linecap="round" stroke-linejoin="round" stroke-width="2.3"><path d="M6 17 V7 Q6 3 10 3 H21 L29 11 V28 Q29 32 25 32 H10 Q6 32 6 28 V27"/><path d="M21 3 V9 Q21 11 23 11 H29"/><path d="M0 22 H19 M14 17 L19 22 L14 27"/></svg><div class="t" style="left:113.0px;top:310.9px;font-size:27px;color:#1a1a1a;font-weight:400;letter-spacing:0.694px;-webkit-text-stroke-width:0.38px;">Import</div><svg class="b" style="left:474px;top:305px;" width="26" height="30" viewBox="474 305 26 30" fill="none" stroke="#2a2a2a" stroke-linecap="round" stroke-linejoin="round" stroke-width="2.5"><path d="M481.5 317 L493 325 L481.5 333"/></svg><svg class="b" style="left:58.5px;top:378.5px;" width="34" height="36" viewBox="0 0 34 36" fill="none" stroke="#3a3a3a" stroke-linecap="round" stroke-linejoin="round" stroke-width="2.3"><path d="M8.5 12 V6.3 Q8.5 3.3 11.5 3.3 H26 Q29 3.3 29 6.3 V16.5"/><path d="M15.5 9 H23 M17.5 13.5 H23"/><path d="M2.5 16 Q2.5 13 5.5 13 H12 L16 16.5 H28.5 Q31.5 16.5 31.5 19.5 V29 Q31.5 32 28.5 32 H5.5 Q2.5 32 2.5 29 Z"/></svg><div class="t" style="left:113.0px;top:384.9px;font-size:27px;color:#1a1a1a;font-weight:400;letter-spacing:-0.104px;-webkit-text-stroke-width:0.38px;">Open</div><svg class="b" style="left:474px;top:379px;" width="26" height="30" viewBox="474 379 26 30" fill="none" stroke="#2a2a2a" stroke-linecap="round" stroke-linejoin="round" stroke-width="2.5"><path d="M481.5 391 L493 399 L481.5 407"/></svg><div class="b" style="left:466px;top:383px;width:2px;height:31px;background:#d6d6d6;"></div><svg class="b" style="left:58.5px;top:442.5px;" width="34" height="36" viewBox="0 0 34 36" fill="none" stroke="#3a3a3a" stroke-linecap="round" stroke-linejoin="round" stroke-width="2.3"><path d="M8.5 12 V6.3 Q8.5 3.3 11.5 3.3 H26 Q29 3.3 29 6.3 V16.5"/><path d="M15.5 9 H23 M17.5 13.5 H23"/><path d="M13 32 H5.5 Q2.5 32 2.5 29 V16 Q2.5 13 5.5 13 H12 L16 16.5 H28.5 Q31.5 16.5 31.5 18"/><path d="M25.73,21.45 L27.14,21.83 L27.44,23.83 L28.17,24.56 L30.17,24.86 L30.55,26.27 L28.97,27.52 L28.70,28.53 L29.44,30.41 L28.41,31.44 L26.53,30.70 L25.52,30.97 L24.27,32.55 L22.86,32.17 L22.56,30.17 L21.83,29.44 L19.83,29.14 L19.45,27.73 L21.03,26.48 L21.30,25.47 L20.56,23.59 L21.59,22.56 L23.47,23.30 L24.48,23.03Z" stroke-width="2"/><circle cx="25" cy="27" r="1.6" stroke-width="1.8"/></svg><div class="t" style="left:113.0px;top:448.9px;font-size:27px;color:#1a1a1a;font-weight:400;-webkit-text-stroke-width:0.38px;">Manage Documents</div><svg class="b" style="left:58.5px;top:516.5px;" width="34" height="36" viewBox="0 0 34 36" fill="none" stroke="#3a3a3a" stroke-linecap="round" stroke-linejoin="round" stroke-width="2.3"><path d="M4 11 V27.5 Q4 32.5 9 32.5 H20"/><path d="M9 7 Q9 3 13 3 H22 L29 10 V24 Q29 28 25 28 H13 Q9 28 9 24 Z"/><path d="M22 3 V8 Q22 10 24 10 H29"/><path d="M14.5 17 H22 M14.5 22 H22"/></svg><div class="t" style="left:113.0px;top:522.9px;font-size:27px;color:#1a1a1a;font-weight:400;letter-spacing:-0.506px;-webkit-text-stroke-width:0.38px;">Make a Copy...</div><div class="t" style="left:427.0px;top:524.5px;font-size:24px;color:#8d9bab;font-weight:400;">⌘⇧S</div><svg class="b" style="left:58.5px;top:580.5px;" width="34" height="36" viewBox="0 0 34 36" fill="none" stroke="#2563c9" stroke-linecap="round" stroke-linejoin="round" stroke-width="2.3"><path d="M3 7.5 Q3 3 7.5 3 H26.5 Q31 3 31 7.5 V28 Q31 32.5 26.5 32.5 H7.5 Q3 32.5 3 28 Z"/><path d="M9.5 11.5 H21 M9.5 17 H15"/><path d="M10.5 32.5 V26 Q10.5 24 12.5 24 H21.5 Q23.5 24 23.5 26 V32.5"/></svg><div class="t" style="left:113.0px;top:586.9px;font-size:27px;color:#2563c9;font-weight:400;letter-spacing:-1.260px;-webkit-text-stroke-width:0.38px;">Save As</div><svg class="b" style="left:474px;top:581px;" width="26" height="30" viewBox="474 581 26 30" fill="none" stroke="#2563c9" stroke-linecap="round" stroke-linejoin="round" stroke-width="2.5"><path d="M481.5 593 L493 601 L481.5 609"/></svg><div class="b" style="left:466px;top:585px;width:2px;height:31px;background:#aac4ee;"></div><svg class="b" style="left:58.5px;top:644.5px;" width="34" height="36" viewBox="0 0 34 36" fill="none" stroke="#3a3a3a" stroke-linecap="round" stroke-linejoin="round" stroke-width="2.3"><path d="M16 3 V22.5 M9.5 16 L16 22.5 L22.5 16"/><path d="M3 21 V28 Q3 32 7 32 H25 Q29 32 29 28 V21"/></svg><div class="t" style="left:113.0px;top:650.9px;font-size:27px;color:#1a1a1a;font-weight:400;letter-spacing:-0.061px;-webkit-text-stroke-width:0.38px;">Download As</div><svg class="b" style="left:474px;top:645px;" width="26" height="30" viewBox="474 645 26 30" fill="none" stroke="#2a2a2a" stroke-linecap="round" stroke-linejoin="round" stroke-width="2.5"><path d="M481.5 657 L493 665 L481.5 673"/></svg><svg class="b" style="left:58.5px;top:718.5px;" width="34" height="36" viewBox="0 0 34 36" fill="none" stroke="#3a3a3a" stroke-linecap="round" stroke-linejoin="round" stroke-width="2.3"><path d="M7 7 H4.5 Q3 7 3 5 Q3 3 5 3 H22 Q25 3 25 6 V15"/><path d="M7 5 V28 Q7 32 11 32 H14"/><path d="M11.5 10 H20 M11.5 15 H17"/><circle cx="23" cy="25" r="8"/><path d="M23 21 V25 H26.5"/><path d="M12.5 24.5 L15 27.5 L17.5 24.5" /></svg><div class="t" style="left:113.0px;top:724.9px;font-size:27px;color:#1a1a1a;font-weight:400;letter-spacing:-0.070px;-webkit-text-stroke-width:0.38px;">Document Versions</div><svg class="b" style="left:474px;top:719px;" width="26" height="30" viewBox="474 719 26 30" fill="none" stroke="#2a2a2a" stroke-linecap="round" stroke-linejoin="round" stroke-width="2.5"><path d="M481.5 731 L493 739 L481.5 747"/></svg><svg class="b" style="left:58.5px;top:792.5px;" width="34" height="36" viewBox="0 0 34 36" fill="none" stroke="#3a3a3a" stroke-linecap="round" stroke-linejoin="round" stroke-width="2.3"><path d="M11 31 H7 Q3 31 3 27 V7 Q3 3 7 3 H19 L26.5 10.5 V14"/><path d="M19 3 V8.5 Q19 10.5 21 10.5 H26.5"/><path d="M8.5 12.5 H13 M8.5 17.5 H13 M8.5 22.5 H12"/><path d="M29.5 22.5 A7.5 7.5 0 1 1 27.5 19.5"/><path d="M19.5 25.5 L22.5 28.5 L30 20.5"/></svg><div class="t" style="left:113.0px;top:798.9px;font-size:27px;color:#1a1a1a;font-weight:400;letter-spacing:-0.547px;-webkit-text-stroke-width:0.38px;">Mark as final</div><svg class="b" style="left:58.5px;top:856.5px;" width="34" height="36" viewBox="0 0 34 36" fill="none" stroke="#3a3a3a" stroke-linecap="round" stroke-linejoin="round" stroke-width="2.3"><circle cx="25" cy="7.5" r="4.7"/><circle cx="6.8" cy="17" r="4.7"/><circle cx="25" cy="26.5" r="4.7"/><path d="M11 14.8 L20.8 9.7 M11 19.2 L20.8 24.3"/></svg><div class="t" style="left:113.0px;top:862.9px;font-size:27px;color:#1a1a1a;font-weight:400;letter-spacing:-1.141px;-webkit-text-stroke-width:0.38px;">Share</div><svg class="b" style="left:474px;top:857px;" width="26" height="30" viewBox="474 857 26 30" fill="none" stroke="#2a2a2a" stroke-linecap="round" stroke-linejoin="round" stroke-width="2.5"><path d="M481.5 869 L493 877 L481.5 885"/></svg><svg class="b" style="left:58.5px;top:920.5px;" width="34" height="36" viewBox="0 0 34 36" fill="none" stroke="#3a3a3a" stroke-linecap="round" stroke-linejoin="round" stroke-width="2.3"><circle cx="16" cy="17.5" r="14.5"/><path d="M1.5 17.5 H30.5 M3.5 10 H28.5 M3.5 25 H28.5"/><ellipse cx="16" cy="17.5" rx="6.5" ry="14.5"/></svg><div class="t" style="left:113.0px;top:926.9px;font-size:27px;color:#1a1a1a;font-weight:400;letter-spacing:-0.469px;-webkit-text-stroke-width:0.38px;">Publish</div><svg class="b" style="left:58.5px;top:984.5px;" width="34" height="36" viewBox="0 0 34 36" fill="none" stroke="#3a3a3a" stroke-linecap="round" stroke-linejoin="round" stroke-width="2.3"><path d="M11 31.5 H6.5 Q3 31.5 3 28 V7 Q3 3 7 3 H19 L26.5 10.5 V13"/><path d="M19 3 V8.5 Q19 10.5 21 10.5 H26.5"/><path d="M8 26 Q11 17 14 20 Q15.5 22 12 27 Q15 22.5 18 22 Q19 25 21 22.5 Q23.5 20 25 22 H30"/><path d="M10 31.5 H29"/></svg><div class="t" style="left:113.0px;top:990.9px;font-size:27px;color:#1a1a1a;font-weight:400;letter-spacing:-0.516px;-webkit-text-stroke-width:0.38px;">Sign</div><svg class="b" style="left:474px;top:985px;" width="26" height="30" viewBox="474 985 26 30" fill="none" stroke="#2a2a2a" stroke-linecap="round" stroke-linejoin="round" stroke-width="2.5"><path d="M481.5 997 L493 1005 L481.5 1013"/></svg><svg class="b" style="left:58.5px;top:1048.5px;" width="34" height="36" viewBox="0 0 34 36" fill="none" stroke="#3a3a3a" stroke-linecap="round" stroke-linejoin="round" stroke-width="2.3"><path d="M10 31 H7 Q3 31 3 27 V7 Q3 3 7 3 H19 L26.5 10.5 V13"/><path d="M19 3 V8.5 Q19 10.5 21 10.5 H26.5"/><path d="M8.5 8.5 H13 M8.5 13 H16"/><path d="M12.5 19 H11 Q8.5 19 8.5 21.5 V24 Q8.5 26.5 11 26.5 H12.5 M20.5 19 H22 Q24.5 19 24.5 21.5 V24 Q24.5 26.5 22 26.5 H20.5"/><path d="M16.5 15.5 V33 M13.5 15.5 H19.5 M13.5 33 H19.5"/></svg><div class="t" style="left:113.0px;top:1054.9px;font-size:27px;color:#1a1a1a;font-weight:400;letter-spacing:-0.592px;-webkit-text-stroke-width:0.38px;">Fill As Form</div><svg class="b" style="left:474px;top:1049px;" width="26" height="30" viewBox="474 1049 26 30" fill="none" stroke="#2a2a2a" stroke-linecap="round" stroke-linejoin="round" stroke-width="2.5"><path d="M481.5 1061 L493 1069 L481.5 1077"/></svg><svg class="b" style="left:58.5px;top:1122.5px;" width="34" height="36" viewBox="0 0 34 36" fill="none" stroke="#3a3a3a" stroke-linecap="round" stroke-linejoin="round" stroke-width="2.3"><path d="M10.5 32 H7 Q3 32 3 28 V7 Q3 3 7 3 H19 L26.5 10.5 V14"/><path d="M19 3 V8.5 Q19 10.5 21 10.5 H26.5"/><path d="M21.44,18.36 L23.26,18.85 L23.67,21.37 L24.63,22.33 L27.15,22.74 L27.64,24.56 L25.66,26.18 L25.30,27.49 L26.21,29.88 L24.88,31.21 L22.49,30.30 L21.18,30.66 L19.56,32.64 L17.74,32.15 L17.33,29.63 L16.37,28.67 L13.85,28.26 L13.36,26.44 L15.34,24.82 L15.70,23.51 L14.79,21.12 L16.12,19.79 L18.51,20.70 L19.82,20.34Z" stroke-width="2.1"/><circle cx="20.5" cy="25.5" r="2.2" stroke-width="2"/></svg><div class="t" style="left:113.0px;top:1128.9px;font-size:27px;color:#1a1a1a;font-weight:400;letter-spacing:-0.569px;-webkit-text-stroke-width:0.38px;">Page Setup</div><svg class="b" style="left:58.5px;top:1186.5px;" width="34" height="36" viewBox="0 0 34 36" fill="none" stroke="#3a3a3a" stroke-linecap="round" stroke-linejoin="round" stroke-width="2.3"><path d="M8 10 V7 Q8 3.5 11.5 3.5 H20.5 Q24 3.5 24 7 V10"/><path d="M8 25.5 H6 Q2.5 25.5 2.5 22 V14 Q2.5 10 6.5 10 H25.5 Q29.5 10 29.5 14 V22 Q29.5 25.5 26 25.5 H24"/><path d="M8 22 Q8 19.5 10.5 19.5 H21.5 Q24 19.5 24 22 V28 Q24 31 21 31 H11 Q8 31 8 28 Z"/></svg><div class="t" style="left:113.0px;top:1192.9px;font-size:27px;color:#1a1a1a;font-weight:400;letter-spacing:-0.133px;-webkit-text-stroke-width:0.38px;">Print</div><div class="t" style="left:447.0px;top:1194.5px;font-size:24px;color:#8d9bab;font-weight:400;">⌘P</div><svg class="b" style="left:58.5px;top:1250.5px;" width="34" height="36" viewBox="0 0 34 36" fill="none" stroke="#3a3a3a" stroke-linecap="round" stroke-linejoin="round" stroke-width="2.3"><circle cx="16" cy="17.5" r="14.5"/><path d="M16 15.5 V25"/><circle cx="16" cy="10.5" r="1.3" fill="#3a3a3a" stroke="none"/></svg><div class="t" style="left:113.0px;top:1256.9px;font-size:27px;color:#1a1a1a;font-weight:400;letter-spacing:0.076px;-webkit-text-stroke-width:0.38px;">Document Properties</div><svg class="b" style="left:58.5px;top:1314.5px;" width="34" height="36" viewBox="0 0 34 36" fill="none" stroke="#3a3a3a" stroke-linecap="round" stroke-linejoin="round" stroke-width="2.3"><path d="M2.5 8 H30"/><path d="M11 8 V5.5 Q11 3 13.5 3 H19 Q21.5 3 21.5 5.5 V8"/><path d="M5.5 8 V28.5 Q5.5 32 9 32 H23.5 Q27 32 27 28.5 V8"/><path d="M13.5 16 V23 M19 16 V23"/></svg><div class="t" style="left:113.0px;top:1320.9px;font-size:27px;color:#1a1a1a;font-weight:400;letter-spacing:-0.507px;-webkit-text-stroke-width:0.38px;">Move to Trash</div><div class="b" style="left:512px;top:558px;width:446px;height:244px;background:#fff;border-radius:12px;box-shadow:0 3px 14px rgba(0,0,0,0.15);"></div><svg class="b" style="left:543px;top:594px;" width="34" height="36" viewBox="0 0 34 36" fill="none" stroke="#3a3a3a" stroke-linecap="round" stroke-linejoin="round" stroke-width="2.3"><path d="M3 7.5 Q3 3 7.5 3 H26.5 Q31 3 31 7.5 V28 Q31 32.5 26.5 32.5 H7.5 Q3 32.5 3 28 Z"/><path d="M9.5 11.5 H21 M9.5 17 H15"/><path d="M10.5 32.5 V26 Q10.5 24 12.5 24 H21.5 Q23.5 24 23.5 26 V32.5"/></svg><div class="t" style="left:597.0px;top:597.9px;font-size:27px;color:#1a1a1a;font-weight:400;letter-spacing:-0.620px;-webkit-text-stroke-width:0.38px;">Save As...</div><svg class="b" style="left:543px;top:658px;" width="34" height="36" viewBox="0 0 34 36" fill="none" stroke="#3a3a3a" stroke-linecap="round" stroke-linejoin="round" stroke-width="2.3"><path d="M3 7.5 Q3 3 7.5 3 H26.5 Q31 3 31 7.5 V28 Q31 32.5 26.5 32.5 H7.5 Q3 32.5 3 28 Z"/><rect x="9" y="8.5" width="16" height="7" rx="3.5"/><path d="M8 19.5 H26"/><path d="M10.5 32.5 V26 Q10.5 24 12.5 24 H21.5 Q23.5 24 23.5 26 V32.5"/></svg><div class="t" style="left:597.0px;top:662.5px;font-size:27px;color:#1a1a1a;font-weight:400;letter-spacing:-0.230px;-webkit-text-stroke-width:0.38px;">Save As Template...</div><div class="b" style="left:522px;top:711px;width:416px;height:2px;background:#e2e2e2;"></div><div class="b" style="left:522px;top:718px;width:416px;height:64px;background:#e9f0fd;border-radius:9px;"></div><svg class="b" style="left:542px;top:731px;" width="34" height="36" viewBox="0 0 34 36" fill="none" stroke="#2563c9" stroke-linecap="round" stroke-linejoin="round" stroke-width="2.3"><path d="M2 19 V10 Q2 3 9 3 H18 Q25 3 25 10 V19 Z"/><path d="M2 13.5 H25"/><path d="M14 17 H19"/><path d="M28 8 Q31 9 31 13 V28.5 Q31 32.5 27 32.5 H9 Q5 32.5 5 28.5 V19"/><path d="M10.5 32.5 V27 Q10.5 25 12.5 25 H20.5 Q22.5 25 22.5 27 V32.5"/></svg><div class="t" style="left:597.0px;top:735.9px;font-size:27px;color:#2563c9;font-weight:400;letter-spacing:-0.318px;-webkit-text-stroke-width:0.38px;">Save to Other Cloud Drives</div><div class="b" style="left:24px;top:558px;width:492px;height:83px;border:10px solid #2668be;"></div><div class="b" style="left:512px;top:558px;width:446px;height:244px;border:10px solid #2668be;"></div>
</body></html>
